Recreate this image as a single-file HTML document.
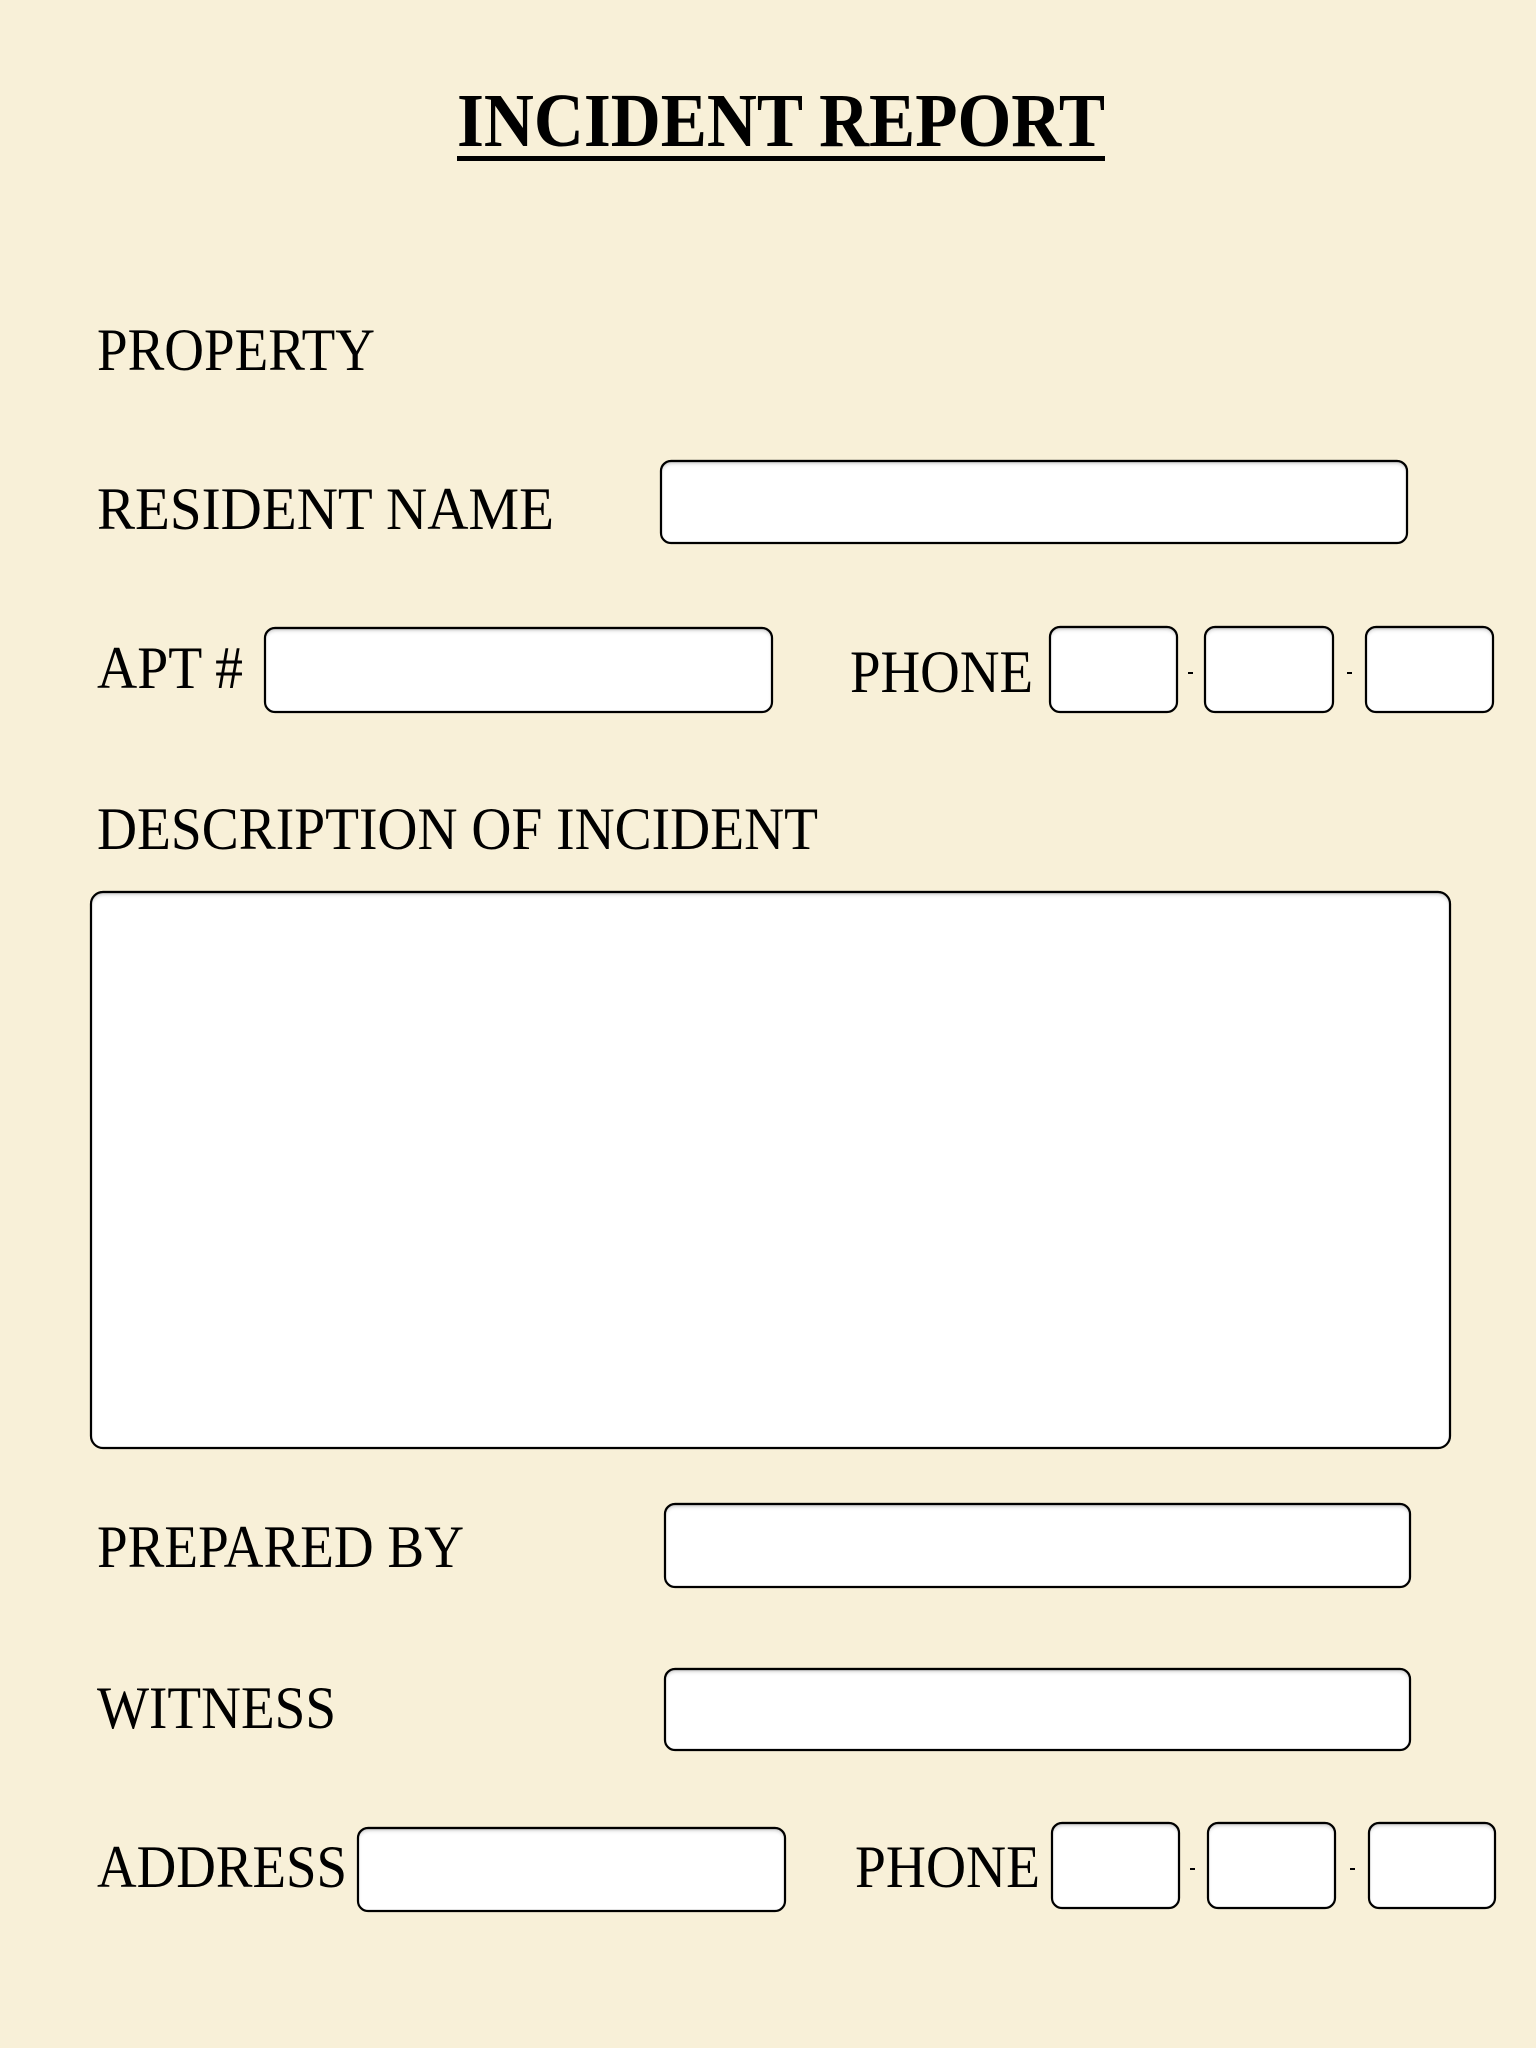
<!DOCTYPE html>
<html><head><meta charset="utf-8"><style>
html,body{margin:0;padding:0;background:#f8f0d8;}
svg{display:block;}
text{font-family:"Liberation Serif",serif;fill:#000;}
</style></head><body>
<svg width="1536" height="2048" viewBox="0 0 1536 2048" xmlns="http://www.w3.org/2000/svg">
<defs>
<filter id="in" x="-5%" y="-5%" width="110%" height="110%">
<feOffset dx="0" dy="3" in="SourceAlpha" result="o"/>
<feGaussianBlur in="o" stdDeviation="2" result="b"/>
<feComposite in="SourceAlpha" in2="b" operator="out" result="s"/>
<feFlood flood-color="#000" flood-opacity="0.6"/>
<feComposite in2="s" operator="in" result="sh"/>
<feMerge><feMergeNode in="SourceGraphic"/><feMergeNode in="sh"/></feMerge>
</filter>
</defs>
<rect width="1536" height="2048" fill="#f8f0d8"/>
<text x="457" y="146" font-size="76" font-weight="bold" textLength="648" lengthAdjust="spacingAndGlyphs">INCIDENT REPORT</text>
<rect x="457" y="156" width="648" height="5" fill="#000"/>
<g font-size="60">
<text x="97" y="370" textLength="278" lengthAdjust="spacingAndGlyphs">PROPERTY</text>
<text x="97" y="529" textLength="457" lengthAdjust="spacingAndGlyphs">RESIDENT  NAME</text>
<text x="97" y="688" textLength="146" lengthAdjust="spacingAndGlyphs">APT #</text>
<text x="850" y="692" textLength="183" lengthAdjust="spacingAndGlyphs">PHONE</text>
<text x="97" y="849" textLength="721" lengthAdjust="spacingAndGlyphs">DESCRIPTION OF INCIDENT</text>
<text x="97" y="1567" textLength="367" lengthAdjust="spacingAndGlyphs">PREPARED BY</text>
<text x="97" y="1728" textLength="239" lengthAdjust="spacingAndGlyphs">WITNESS</text>
<text x="97" y="1887" textLength="250" lengthAdjust="spacingAndGlyphs">ADDRESS</text>
<text x="855" y="1887" textLength="185" lengthAdjust="spacingAndGlyphs">PHONE</text>
</g>
<g fill="#fff" stroke="#111" stroke-width="2.2" filter="url(#in)">
<rect x="661" y="461" width="746" height="82" rx="10"/>
<rect x="265" y="628" width="507" height="84" rx="10"/>
<rect x="1050" y="627" width="127" height="85" rx="10"/>
<rect x="1205" y="627" width="128" height="85" rx="10"/>
<rect x="1366" y="627" width="127" height="85" rx="10"/>
<rect x="91" y="892" width="1359" height="556" rx="12"/>
<rect x="665" y="1504" width="745" height="83" rx="10"/>
<rect x="665" y="1669" width="745" height="81" rx="10"/>
<rect x="358" y="1828" width="427" height="83" rx="10"/>
<rect x="1052" y="1823" width="127" height="85" rx="10"/>
<rect x="1208" y="1823" width="127" height="85" rx="10"/>
<rect x="1369" y="1823" width="126" height="85" rx="10"/>
</g>
<g fill="#000">
<rect x="1188" y="672" width="5" height="2"/>
<rect x="1347" y="672" width="5" height="2"/>
<rect x="1190" y="1868" width="5" height="2"/>
<rect x="1350" y="1868" width="5" height="2"/>
</g>
</svg>
</body></html>
